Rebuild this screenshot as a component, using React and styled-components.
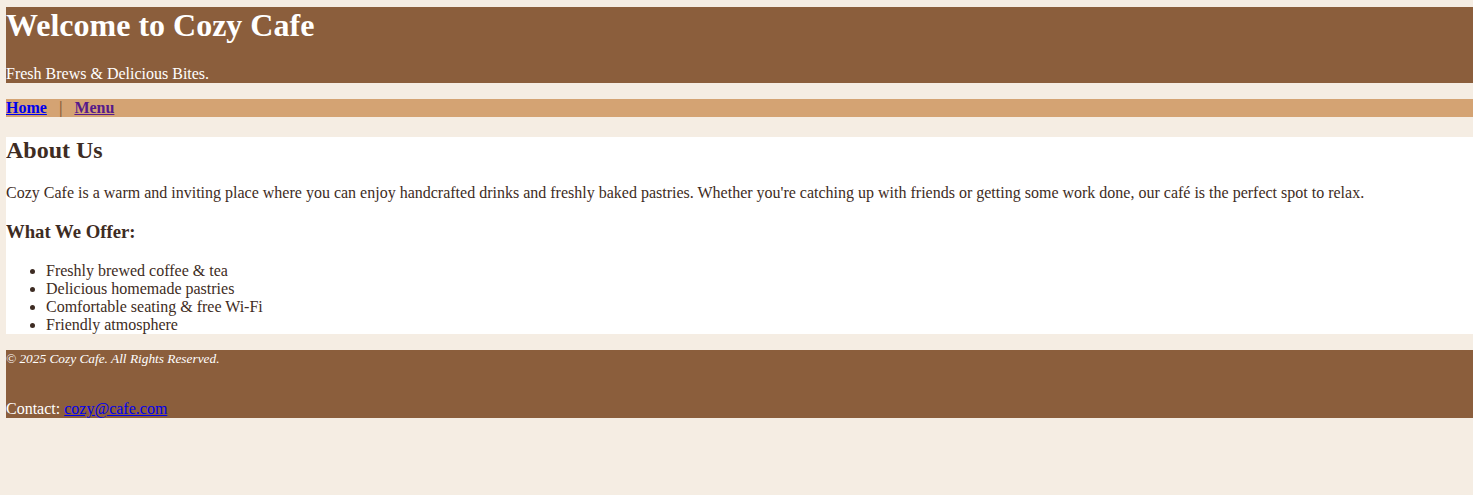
import styled, { createGlobalStyle } from "styled-components";

const GlobalStyle = createGlobalStyle`
  html, body {
    background: #f5ede3;
  }
  body {
    margin: 7px 0 0 6px;
    font-family: "Liberation Serif", "Times New Roman", serif;
    font-size: 16px;
    color: #3e2c23;
  }
`

const Header = styled.header`
  background-color: #8b5e3c;
  color: #ffffff;
  display: flow-root;
`

const Title = styled.h1`
  font-size: 32px;
  margin: 0 0 21.44px;
`

const Tagline = styled.p`
  margin: 0;
`

const Nav = styled.nav`
  background-color: #d4a373;
  margin-top: 16px;
  font-weight: bold;
  color: #8b5e3c;
`

const NavLink = styled.a`
  color: ${props => (props.$visited ? "#551a8b" : "#0000ee")};
  text-decoration: underline;
`

const Sep = styled.span`
  margin: 0 12px;
`

const Main = styled.main`
  background-color: #ffffff;
  margin-top: 20px;
  display: flow-root;
`

const Heading = styled.h2`
  font-size: 24px;
  margin: 0 0 19.92px;
`

const Text = styled.p`
  margin: 0 0 16px;
`

const SubHeading = styled.h3`
  font-size: 18.72px;
  margin: 18.72px 0;
`

const List = styled.ul`
  margin: 0;
  padding-left: 40px;
`

const Footer = styled.footer`
  background-color: #8b5e3c;
  color: #ffffff;
  margin-top: 16px;
  display: flow-root;
`

const Copy = styled.p`
  margin: 0 0 32px;
  font-size: 13.33px;
  font-style: italic;
  line-height: 18px;
`

const Contact = styled.p`
  margin: 0;
`

const Mail = styled.a`
  color: #0000ee;
  text-decoration: underline;
`

const App = () => {
    return (
        <>
            <GlobalStyle />
            <Header>
                <Title>Welcome to Cozy Cafe</Title>
                <Tagline>Fresh Brews &amp; Delicious Bites.</Tagline>
            </Header>
            <Nav>
                <NavLink href="#">Home</NavLink>
                <Sep>|</Sep>
                <NavLink href="#" $visited>Menu</NavLink>
            </Nav>
            <Main>
                <Heading>About Us</Heading>
                <Text>
                    Cozy Cafe is a warm and inviting place where you can enjoy handcrafted drinks and freshly baked pastries. Whether you're catching up with friends or getting some work done, our café is the perfect spot to relax.
                </Text>
                <SubHeading>What We Offer:</SubHeading>
                <List>
                    <li>Freshly brewed coffee &amp; tea</li>
                    <li>Delicious homemade pastries</li>
                    <li>Comfortable seating &amp; free Wi-Fi</li>
                    <li>Friendly atmosphere</li>
                </List>
            </Main>
            <Footer>
                <Copy>© 2025 Cozy Cafe. All Rights Reserved.</Copy>
                <Contact>Contact: <Mail href="#">cozy@cafe.com</Mail></Contact>
            </Footer>
        </>
    )
}

export default App
